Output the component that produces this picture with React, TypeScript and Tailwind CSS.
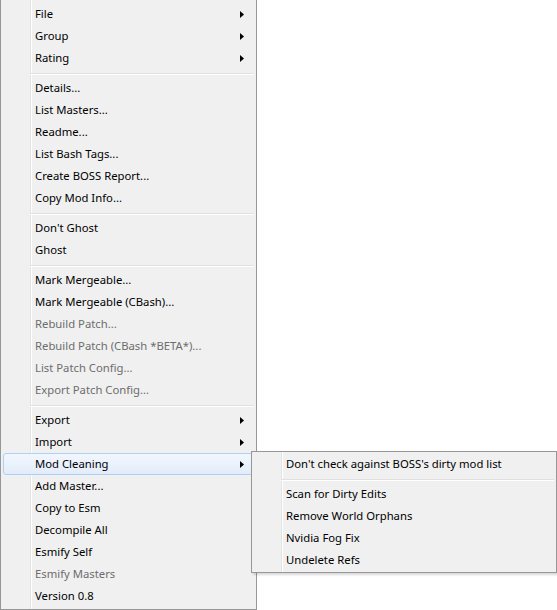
import type { ReactNode } from 'react'

type Item = { label: string; sub?: boolean; disabled?: boolean; active?: boolean }
type Group = Item[]

const mainMenu: Group[] = [
  [
    { label: 'File', sub: true },
    { label: 'Group', sub: true },
    { label: 'Rating', sub: true },
  ],
  [
    { label: 'Details...' },
    { label: 'List Masters...' },
    { label: 'Readme...' },
    { label: 'List Bash Tags...' },
    { label: 'Create BOSS Report...' },
    { label: 'Copy Mod Info...' },
  ],
  [{ label: "Don't Ghost" }, { label: 'Ghost' }],
  [
    { label: 'Mark Mergeable...' },
    { label: 'Mark Mergeable (CBash)...' },
    { label: 'Rebuild Patch...', disabled: true },
    { label: 'Rebuild Patch (CBash *BETA*)...', disabled: true },
    { label: 'List Patch Config...', disabled: true },
    { label: 'Export Patch Config...', disabled: true },
  ],
  [
    { label: 'Export', sub: true },
    { label: 'Import', sub: true },
    { label: 'Mod Cleaning', sub: true, active: true },
    { label: 'Add Master...' },
    { label: 'Copy to Esm' },
    { label: 'Decompile All' },
    { label: 'Esmify Self' },
    { label: 'Esmify Masters', disabled: true },
    { label: 'Version 0.8' },
  ],
]

const cleaningMenu: Group[] = [
  [{ label: "Don't check against BOSS's dirty mod list" }],
  [
    { label: 'Scan for Dirty Edits' },
    { label: 'Remove World Orphans' },
    { label: 'Nvidia Fog Fix' },
    { label: 'Undelete Refs' },
  ],
]

function Arrow() {
  return (
    <svg width="4" height="7" viewBox="0 0 4 7" className="absolute right-[9px] top-[7px]">
      <path d="M0 0 L4 3.5 L0 7 Z" fill="#000" />
    </svg>
  )
}

function Row({ item }: { item: Item }) {
  return (
    <div
      className={
        'relative h-[22px] flex items-center pl-[31px] ' +
        (item.active
          ? 'rounded-[3px] border border-[#aecff7] bg-gradient-to-b from-[#f2f7fe] to-[#e2ecf9]'
          : 'border border-transparent')
      }
    >
      <span className={item.disabled ? 'text-[#6d6d6d]' : 'text-black'}>{item.label}</span>
      {item.sub && <Arrow />}
    </div>
  )
}

function Separator() {
  return (
    <div className="h-[8px] pl-[27px] pt-[4px]">
      <div className="h-px bg-[#e0e0e0]" />
      <div className="h-px bg-white" />
    </div>
  )
}

function Menu({ groups, className }: { groups: Group[]; className: string }): ReactNode {
  return (
    <div className={'relative bg-[#f0f0f0] text-[11.3px] leading-none ' + className}>
      {/* gutter line */}
      <div className="absolute top-0 bottom-0 left-[29px] w-[2px] flex">
        <div className="w-px bg-[#e2e3e3]" />
        <div className="w-px bg-white" />
      </div>
      <div className="relative px-[2px]">
        {groups.map((g, gi) => (
          <div key={gi}>
            {gi > 0 && <Separator />}
            {g.map((it) => (
              <Row key={it.label} item={it} />
            ))}
          </div>
        ))}
      </div>
    </div>
  )
}

export default function App() {
  return (
    <div
      className="relative w-[557px] h-[610px] bg-white overflow-hidden"
      style={{ fontFamily: '"Noto Sans", "Open Sans", sans-serif' }}
    >
      <Menu
        groups={mainMenu}
        className="w-[257px] border-l border-r border-b border-[#979797] pt-[3px] pb-[2px]"
      />
      <div className="absolute left-[251px] top-[451px]">
        <Menu
          groups={cleaningMenu}
          className="w-[306px] border border-[#979797] pt-[1px] pb-[1px] shadow-[2px_2px_2px_rgba(0,0,0,0.15)]"
        />
      </div>
    </div>
  )
}
